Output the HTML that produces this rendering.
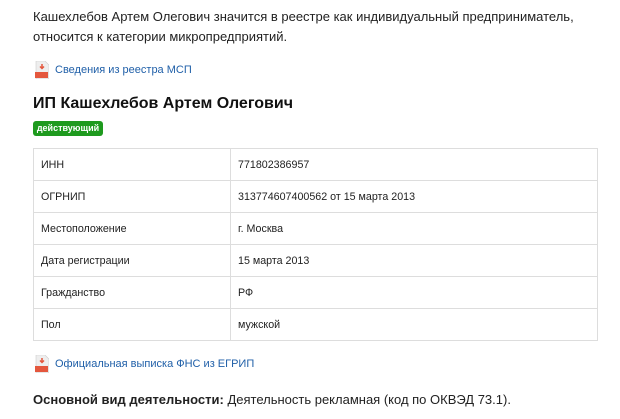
<!DOCTYPE html>
<html><head><meta charset="utf-8"><style>
body{margin:0;width:620px;height:419px;overflow:hidden;background:#fff;font-family:"Liberation Sans",sans-serif;color:#222;position:relative}
.a{position:absolute}
p{margin:0}
.t{font-size:13px;line-height:20px}
.lnk{font-size:11px;color:#1f5fa8}
.pdf{position:absolute;width:14px;height:18px}
table{border-collapse:collapse;position:absolute;left:33px;top:148px;width:565px;font-size:10.7px;color:#222}
td{border:1px solid #ddd;height:31px;padding:0 0 0 7px}
td:first-child{width:189px}
</style></head><body>
<p class="a t" style="left:33px;top:7px">Кашехлебов Артем Олегович значится в реестре как индивидуальный предприниматель,<br>относится к категории микропредприятий.</p>
<svg class="pdf" style="left:35px;top:61px" viewBox="0 0 14 18"><path d="M1 0h9l4 4v14H1z" fill="#eee" stroke="#ccc" stroke-width=".6"/><rect x="0" y="11" width="13" height="6" fill="#e4573d"/><path d="M7 3v4M5 5.5l2 2 2-2" stroke="#e4573d" stroke-width="1.5" fill="none"/></svg>
<span class="a lnk" style="left:55px;top:64px">Сведения из реестра МСП</span>
<div class="a" style="left:33px;top:95px;font-size:16px;font-weight:bold;color:#111">ИП Кашехлебов Артем Олегович</div>
<div class="a" style="left:33px;top:121px;width:70px;height:15px;background:#1e9a1e;border-radius:3px;color:#fff;font-size:9px;font-weight:bold;line-height:15px;text-align:center">действующий</div>
<table>
<tr><td>ИНН</td><td>771802386957</td></tr>
<tr><td>ОГРНИП</td><td>313774607400562 от 15 марта 2013</td></tr>
<tr><td>Местоположение</td><td>г. Москва</td></tr>
<tr><td>Дата регистрации</td><td>15 марта 2013</td></tr>
<tr><td>Гражданство</td><td>РФ</td></tr>
<tr><td>Пол</td><td>мужской</td></tr>
</table>
<svg class="pdf" style="left:35px;top:355px" viewBox="0 0 14 18"><path d="M1 0h9l4 4v14H1z" fill="#eee" stroke="#ccc" stroke-width=".6"/><rect x="0" y="11" width="13" height="6" fill="#e4573d"/><path d="M7 3v4M5 5.5l2 2 2-2" stroke="#e4573d" stroke-width="1.5" fill="none"/></svg>
<span class="a lnk" style="left:55px;top:358px">Официальная выписка ФНС из ЕГРИП</span>
<p class="a t" style="left:33px;top:390px"><b>Основной вид деятельности:</b> Деятельность рекламная (код по ОКВЭД 73.1).</p>
</body></html>
